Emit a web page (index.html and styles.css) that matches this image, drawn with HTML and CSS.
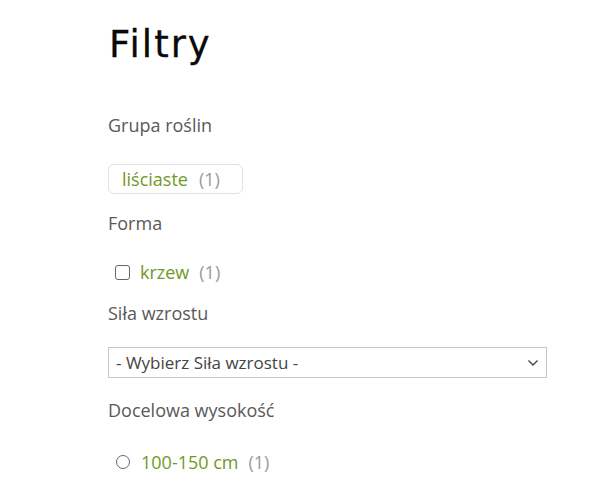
FILE: index.html
```html
<!DOCTYPE html>
<html lang="pl">
<head>
<meta charset="utf-8">
<link rel="stylesheet" href="styles.css">
</head>
<body>
<aside class="filters">
  <h2 class="title">Filtry</h2>
  <div class="group g1">
    <div class="label">Grupa roślin</div>
    <div class="pills"><a class="pill"><span class="name">liściaste</span><span class="count">(1)</span></a></div>
  </div>
  <div class="group g2">
    <div class="label">Forma</div>
    <div class="option"><span class="box"></span><span class="name">krzew</span><span class="count">(1)</span></div>
  </div>
  <div class="group g3">
    <div class="label">Siła wzrostu</div>
    <div class="select"><span>- Wybierz Siła wzrostu -</span>
      <svg class="chev" width="12" height="8" viewBox="0 0 12 8"><path d="M1.5 1.5 L6 6 L10.5 1.5" fill="none" stroke="#444" stroke-width="1.4"/></svg>
    </div>
  </div>
  <div class="group g4">
    <div class="label">Docelowa wysokość</div>
    <div class="option"><span class="radio"></span><span class="name">100-150 cm</span><span class="count">(1)</span></div>
  </div>
</aside>
</body>
</html>
```
FILE: styles.css
```css
html, body { margin: 0; padding: 0; background: #fff; }
body { font-family: "Open Sans", sans-serif; color: #555; }
.filters { width: 439px; margin-left: 108px; padding-top: 22px; }
.title { font-family: "DejaVu Sans", sans-serif; font-weight: 400; font-size: 37px; color: #0a0a0a; margin: 0 0 0 1px; line-height: 46px; letter-spacing: 2px; -webkit-text-stroke: 0.3px #0a0a0a; }
.group { display: flex; flex-direction: column; }
.label { font-size: 18px; line-height: 24px; color: #595959; }
.name { color: #6f9a25; }
.count { color: #9a9a9a; }
.g1 { margin-top: 45px; }
.g1 .label { margin-bottom: 27px; }
.pills { display: flex; }
.pill { display: flex; gap: 11px; align-items: center; height: 30px; box-sizing: border-box; padding: 0 22px 0 13px; border: 1px solid #e2e2e2; border-radius: 6px; font-size: 18px; }
.g2 { margin-top: 17px; }
.g2 .label { margin-bottom: 25px; }
.option { display: flex; align-items: center; gap: 10px; font-size: 18px; line-height: 24px; }
.box { flex: none; width: 15px; height: 15px; box-sizing: border-box; border: 1.5px solid #666; border-radius: 3px; margin-left: 7px; }
.radio { flex: none; width: 14px; height: 14px; box-sizing: border-box; border: 1.5px solid #666; border-radius: 50%; margin-left: 8px; margin-right: 1px; }
.g3 { margin-top: 17px; }
.g3 .label { margin-bottom: 22px; }
.select { display: flex; align-items: center; justify-content: space-between; height: 31px; box-sizing: border-box; border: 1px solid #c6c6c6; padding: 0 7px 0 7px; font-size: 17px; color: #444; }
.g4 { margin-top: 20px; }
.g4 .label { margin-bottom: 28px; }
```
